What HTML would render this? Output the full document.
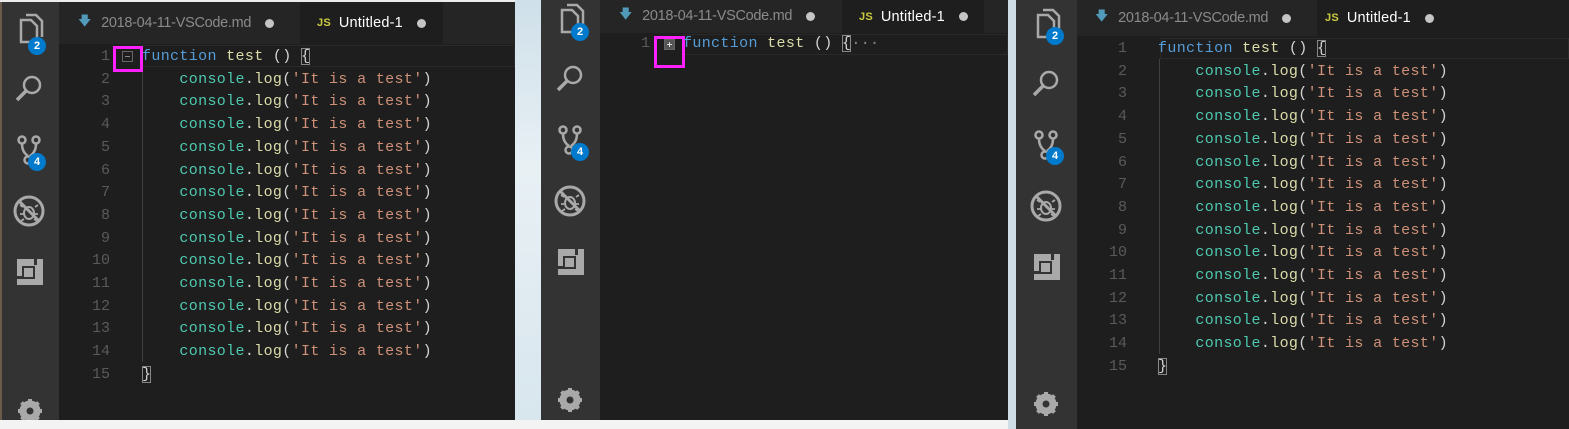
<!DOCTYPE html>
<html><head><meta charset="utf-8"><style>
*{margin:0;padding:0;box-sizing:border-box}
body{width:1569px;height:429px;overflow:hidden;background:#f3f3f3;position:relative;font-family:"Liberation Sans",sans-serif}
.abs{position:absolute}
.act{background:#333333}
.ed{background:#1e1e1e}
.tabs{background:#252526}
.tab{position:absolute;font-size:14.5px;color:#8a8a8a;white-space:nowrap;display:flex;align-items:center;letter-spacing:-0.3px}
.tab.a{background:#1e1e1e;color:#fff;letter-spacing:0.2px}
.dot{display:inline-block;width:9px;height:9px;border-radius:50%;background:#c5c5c5;margin-left:14px}
.js{color:#cbcb41;font-weight:bold;font-size:11px;margin-right:8px}
.arr{color:#519aba;margin-right:10px;font-size:13px}
.code{position:absolute;font-family:"Liberation Mono",monospace;font-size:15px;white-space:pre;color:#d4d4d4;letter-spacing:0.35px}
.ln{position:absolute;font-family:"Liberation Mono",monospace;font-size:15px;color:#5a5a5a;text-align:right;width:30px}
.k{color:#569cd6}.f{color:#dcdcaa}.c{color:#4ec9b0}.s{color:#ce9178}
.badge{position:absolute;width:18px;height:18px;border-radius:50%;background:#007acc;color:#fff;font-size:11px;font-weight:bold;text-align:center;line-height:18px}
.br{outline:1px solid #888;outline-offset:-1px}
</style></head><body>

<!-- PANEL 1 -->
<div class="abs" style="left:0;top:0;width:2px;height:420px;background:#6a5a4a"></div>
<div class="abs act" style="left:2px;top:0;width:57px;height:420px"></div>
<div class="abs tabs" style="left:59px;top:0;width:456px;height:44px"></div>
<div class="abs ed" style="left:59px;top:44px;width:456px;height:376px"></div>
<div class="abs" style="left:0;top:0;width:515px;height:2px;background:#ececec"></div>
<div class="tab" style="left:78px;top:2px;height:42px"><span class="arr">🡇</span>2018-04-11-VSCode.md<span class="dot"></span></div>
<div class="tab a" style="left:300px;top:2px;height:42px;width:143px;padding-left:17px">
<span class="js">JS</span>Untitled-1<span class="dot"></span></div>
<div class="abs" style="left:142px;top:45px;width:373px;height:22px;border:1px solid #2a2a2a"></div>
<div class="abs" style="left:142px;top:67px;width:1px;height:295px;background:#404040"></div>
<div class="abs" style="left:113px;top:46px;width:30px;height:26px;border:3px solid #ff20ff"></div>
<div class="abs" style="left:122px;top:51px;width:11px;height:11px;border:1px solid #666"><div style="margin:4px 2px 0;height:1px;background:#888"></div></div>

<!-- PANEL 2 -->
<div class="abs" style="left:515px;top:0;width:26px;height:420px;background:linear-gradient(#cfe0ea,#e8f0f4 40%,#d8e6ee)"></div>
<div class="abs act" style="left:541px;top:0;width:59px;height:420px"></div>
<div class="abs tabs" style="left:600px;top:0;width:408px;height:33px"></div>
<div class="abs ed" style="left:600px;top:33px;width:408px;height:387px"></div>
<div class="tab" style="left:619px;top:0;height:32px"><span class="arr">🡇</span>2018-04-11-VSCode.md<span class="dot"></span></div>
<div class="tab a" style="left:842px;top:0;height:33px;width:142px;padding-left:17px"><span class="js">JS</span>Untitled-1<span class="dot"></span></div>
<div class="abs" style="left:683px;top:34px;width:325px;height:21px;border:1px solid #2a2a2a"></div>
<div class="abs" style="left:654px;top:36px;width:31px;height:32px;border:3px solid #ff20ff"></div>
<div class="abs" style="left:664px;top:39px;width:11px;height:11px;background:#555;border:1px solid #666"><div style="position:absolute;left:2px;top:4px;width:5px;height:1px;background:#ddd"></div><div style="position:absolute;left:4px;top:2px;width:1px;height:5px;background:#ddd"></div></div>
<div class="ln" style="left:620px;top:35px">1</div>
<div class="code" style="left:683px;top:35px"><span class="k">function</span> <span class="f">test</span> () <span class="br">{</span><span style="color:#888">···</span></div>
<div class="abs" style="left:1008px;top:0;width:8px;height:429px;background:#cfdde6"></div>

<!-- PANEL 3 -->
<div class="abs act" style="left:1016px;top:0;width:61px;height:429px"></div>
<div class="abs tabs" style="left:1077px;top:0;width:492px;height:36px"></div>
<div class="abs ed" style="left:1077px;top:36px;width:492px;height:393px"></div>
<div class="tab" style="left:1095px;top:0;height:36px"><span class="arr">🡇</span>2018-04-11-VSCode.md<span class="dot"></span></div>
<div class="tab a" style="left:1317px;top:0;height:36px;width:252px;padding-left:8px"><span class="js">JS</span>Untitled-1<span class="dot"></span></div>
<div class="abs" style="left:1160px;top:38px;width:409px;height:21px;border:1px solid #2a2a2a"></div>
<div class="abs" style="left:1159px;top:59px;width:1px;height:295px;background:#404040"></div>

<!-- line numbers & code panel 1 -->
<div class="ln" style="left:80px;top:46px;line-height:22.7px">1<br>2<br>3<br>4<br>5<br>6<br>7<br>8<br>9<br>10<br>11<br>12<br>13<br>14<br>15</div>
<div class="code" style="left:142px;top:46px;line-height:22.7px"><span class="k">function</span> <span class="f">test</span> () <span class="br">{</span>
    <span class="c">console</span>.<span class="f">log</span>(<span class="s">'It is a test'</span>)
    <span class="c">console</span>.<span class="f">log</span>(<span class="s">'It is a test'</span>)
    <span class="c">console</span>.<span class="f">log</span>(<span class="s">'It is a test'</span>)
    <span class="c">console</span>.<span class="f">log</span>(<span class="s">'It is a test'</span>)
    <span class="c">console</span>.<span class="f">log</span>(<span class="s">'It is a test'</span>)
    <span class="c">console</span>.<span class="f">log</span>(<span class="s">'It is a test'</span>)
    <span class="c">console</span>.<span class="f">log</span>(<span class="s">'It is a test'</span>)
    <span class="c">console</span>.<span class="f">log</span>(<span class="s">'It is a test'</span>)
    <span class="c">console</span>.<span class="f">log</span>(<span class="s">'It is a test'</span>)
    <span class="c">console</span>.<span class="f">log</span>(<span class="s">'It is a test'</span>)
    <span class="c">console</span>.<span class="f">log</span>(<span class="s">'It is a test'</span>)
    <span class="c">console</span>.<span class="f">log</span>(<span class="s">'It is a test'</span>)
    <span class="c">console</span>.<span class="f">log</span>(<span class="s">'It is a test'</span>)
<span class="br">}</span></div>

<!-- panel 3 -->
<div class="ln" style="left:1097px;top:38px;line-height:22.7px">1<br>2<br>3<br>4<br>5<br>6<br>7<br>8<br>9<br>10<br>11<br>12<br>13<br>14<br>15</div>
<div class="code" style="left:1158px;top:38px;line-height:22.7px"><span class="k">function</span> <span class="f">test</span> () <span class="br">{</span>
    <span class="c">console</span>.<span class="f">log</span>(<span class="s">'It is a test'</span>)
    <span class="c">console</span>.<span class="f">log</span>(<span class="s">'It is a test'</span>)
    <span class="c">console</span>.<span class="f">log</span>(<span class="s">'It is a test'</span>)
    <span class="c">console</span>.<span class="f">log</span>(<span class="s">'It is a test'</span>)
    <span class="c">console</span>.<span class="f">log</span>(<span class="s">'It is a test'</span>)
    <span class="c">console</span>.<span class="f">log</span>(<span class="s">'It is a test'</span>)
    <span class="c">console</span>.<span class="f">log</span>(<span class="s">'It is a test'</span>)
    <span class="c">console</span>.<span class="f">log</span>(<span class="s">'It is a test'</span>)
    <span class="c">console</span>.<span class="f">log</span>(<span class="s">'It is a test'</span>)
    <span class="c">console</span>.<span class="f">log</span>(<span class="s">'It is a test'</span>)
    <span class="c">console</span>.<span class="f">log</span>(<span class="s">'It is a test'</span>)
    <span class="c">console</span>.<span class="f">log</span>(<span class="s">'It is a test'</span>)
    <span class="c">console</span>.<span class="f">log</span>(<span class="s">'It is a test'</span>)
<span class="br">}</span></div>

<!-- activity icons -->
<svg class="abs" style="left:0;top:0" width="1569" height="429">
<defs>
<g id="icons" fill="none" stroke="#a9a9a9" stroke-width="2.5">
  <path d="M-8,-10 h10 l6,6 v16 h-16 z"/>
  <path d="M-3,-15 h10 l6,6 v16"/>
  <circle cx="3" cy="55" r="8"/>
  <path d="M-3,61 l-9,9" stroke-width="3.5"/>
  <circle cx="-7" cy="110" r="3.5"/><circle cx="7" cy="110" r="3.5"/><circle cx="-1" cy="130" r="3.5"/>
  <path d="M-7,114 q0,8 6,12 M7,114 q0,8 -6,12"/>
  <circle cx="0" cy="181" r="14" stroke-width="3"/>
  <ellipse cx="0" cy="183" rx="5" ry="6" fill="none" stroke-width="2"/>
  <path d="M-6,177 l-3,-2 M6,177 l3,-2 M-5,184 h-4 M5,184 h4 M-5,189 l-3,2 M5,189 l3,2" stroke-width="1.8"/>
  <path d="M-10,171 l20,20" stroke-width="3"/>
  <rect x="-12" y="229" width="26" height="26" fill="#a9a9a9" stroke="none"/>
  <rect x="-7" y="236" width="13" height="13" fill="#333" stroke="none"/>
  <rect x="-5" y="238" width="9" height="9" fill="#a9a9a9" stroke="none"/>
  <rect x="5" y="229" width="3" height="6" fill="#333" stroke="none"/>
  <rect x="-12" y="246" width="5" height="3" fill="#333" stroke="none"/>
</g>
<g id="gear">
  <circle cx="0" cy="0" r="8" fill="none" stroke="#a9a9a9" stroke-width="5"/>
  <g stroke="#a9a9a9" stroke-width="4">
  <path d="M0,-12 v24 M-12,0 h24 M-8.5,-8.5 l17,17 M8.5,-8.5 l-17,17"/></g>
  <circle cx="0" cy="0" r="3.5" fill="#333"/>
</g>
</defs>
<use href="#icons" x="29" y="30"/>
<use href="#icons" x="570" y="20"/>
<use href="#icons" x="1046" y="25"/>
<use href="#gear" x="30" y="411"/>
<use href="#gear" x="570" y="400"/>
<use href="#gear" x="1046" y="404"/>
</svg>
<div class="abs" style="left:0;top:420px;width:1008px;height:9px;background:#f3f3f3"></div>
<div class="badge" style="left:28px;top:37px">2</div>
<div class="badge" style="left:28px;top:153px">4</div>
<div class="badge" style="left:571px;top:23px">2</div>
<div class="badge" style="left:571px;top:143px">4</div>
<div class="badge" style="left:1046px;top:27px">2</div>
<div class="badge" style="left:1046px;top:147px">4</div>
</body></html>
